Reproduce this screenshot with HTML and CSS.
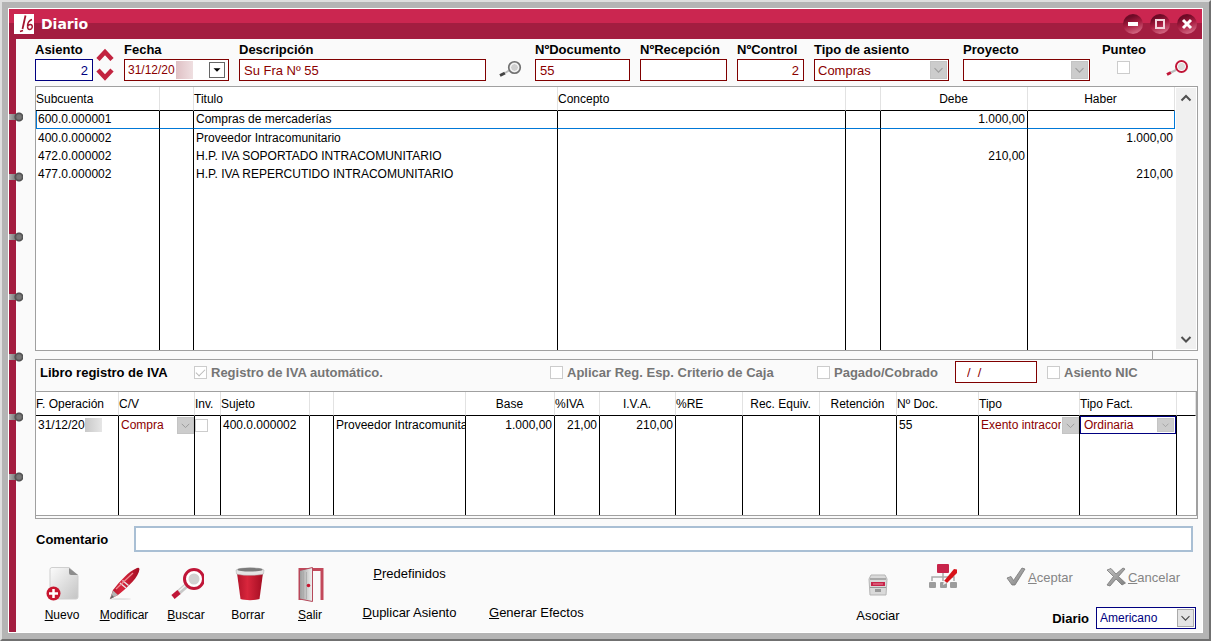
FILE: index.html
```html
<!doctype html>
<html lang="es">
<head>
    <meta charset="utf-8">
    <meta name="viewport" content="width=device-width, initial-scale=1.0">
    <title>Diario</title>
    <link rel="stylesheet" href="styles.css">
</head>
<body>
    <svg class="defs" aria-hidden="true">
        <defs>
            <linearGradient id="paper" x1="0" y1="0" x2="1" y2="1">
                <stop offset="0" stop-color="#fbfbfb"/>
                <stop offset="1" stop-color="#c4c4c4"/>
            </linearGradient>
            <linearGradient id="red" x1="0" y1="0" x2="1" y2="0">
                <stop offset="0" stop-color="#b3142a"/>
                <stop offset=".4" stop-color="#d8263c"/>
                <stop offset="1" stop-color="#a30d22"/>
            </linearGradient>
            <linearGradient id="grey" x1="0" y1="0" x2="1" y2="1">
                <stop offset="0" stop-color="#c4c4c4"/>
                <stop offset="1" stop-color="#7d7d7d"/>
            </linearGradient>
            <linearGradient id="door" x1="0" y1="0" x2="1" y2="0">
                <stop offset="0" stop-color="#9a9a9a"/>
                <stop offset="1" stop-color="#f2f2f2"/>
            </linearGradient>
            <symbol id="chevron" viewBox="0 0 17 18">
                <path d="M4 7l4.500 4.500L13 7" fill="none" stroke="currentColor" stroke-width="1.200"/>
            </symbol>
        </defs>
    </svg>

    <div class="frame">
        <div class="window">
            <header class="titlebar">
                <svg class="logo" viewBox="0 0 20 20">
                    <rect width="20" height="20" fill="#fff"/>
                    <path d="M11.500 1.500L8.500 15" stroke="#a3152f" stroke-width="1.800" fill="none"/>
                    <path d="M6 17.500l3-1" stroke="#a3152f" stroke-width="1.500"/>
                    <path d="M18 5.500c-3 1-4.500 4-4.500 7 0 2 1 3 2.200 3s2.600-1.200 2.600-2.800-.8-2.200-2-2.200-2.400 1-2.800 2.400" stroke="#a3152f" stroke-width="1.400" fill="none"/>
                </svg>
                <h1 class="title">Diario</h1>
                <button class="winbtn" aria-label="Minimizar"><svg viewBox="0 0 20 20"><path d="M5 10h10" stroke="#fff" stroke-width="4"/></svg></button>
                <button class="winbtn" aria-label="Maximizar"><svg viewBox="0 0 20 20"><rect x="6" y="6" width="8" height="8" fill="none" stroke="#f3d6dd" stroke-width="2"/></svg></button>
                <button class="winbtn" aria-label="Cerrar"><svg viewBox="0 0 20 20"><path d="M6 6l8 8M14 6l-8 8" stroke="#fff" stroke-width="3"/></svg></button>
            </header>

            <div class="body">
                <div class="spine">
                    <i class="ring"></i><i class="ring"></i><i class="ring"></i><i class="ring"></i><i class="ring"></i><i class="ring"></i><i class="ring"></i>
                </div>

                <main class="content">
                    <form class="entry">
                        <div class="asiento">
                            <div class="field">
                                <label for="asiento">Asiento</label>
                                <input class="box navy num" id="asiento" value="2">
                            </div>
                            <div class="spin">
                                <button type="button" aria-label="Siguiente"><svg viewBox="0 0 18 13"><path d="M2 11.500l7-7.500 7 7.500" fill="none" stroke="#c22440" stroke-width="4.500"/></svg></button>
                                <button type="button" aria-label="Anterior"><svg viewBox="0 0 18 13"><path d="M2 2l7 7.500L16 2" fill="none" stroke="#c22440" stroke-width="4.500"/></svg></button>
                            </div>
                        </div>
                        <div class="field">
                            <label for="fecha">Fecha</label>
                            <div class="box date">
                                <input id="fecha" value="31/12/20">
                                <span class="smudge pink"></span>
                                <button type="button" class="drop" aria-label="Abrir calendario"><svg viewBox="0 0 16 16"><path d="M4 6h8l-4 4z"/></svg></button>
                            </div>
                        </div>
                        <div class="field">
                            <label for="desc">Descripción</label>
                            <input class="box" id="desc" value="Su Fra Nº 55">
                        </div>
                        <button type="button" class="lens" aria-label="Buscar descripción">
                            <svg viewBox="0 0 24 18"><path d="M1 15.500l5-2.500" stroke="#444" stroke-width="3"/><path d="M6 13l4-2.500" stroke="#bbb" stroke-width="2"/><circle cx="15.500" cy="7.500" r="5.800" fill="#ddd" stroke="#707070" stroke-width="1.600"/><circle cx="15.500" cy="7.500" r="4" fill="#cfcfcf" stroke="#fff"/></svg>
                        </button>
                        <div class="field">
                            <label for="doc">NºDocumento</label>
                            <input class="box" id="doc" value="55">
                        </div>
                        <div class="field">
                            <label for="rec">NºRecepción</label>
                            <input class="box" id="rec">
                        </div>
                        <div class="field">
                            <label for="control">NºControl</label>
                            <input class="box num" id="control" value="2">
                        </div>
                        <div class="field tipo">
                            <label for="tipo">Tipo de asiento</label>
                            <div class="box combo off">
                                <select id="tipo"><option>Compras</option></select>
                                <svg class="arrow"><use href="#chevron"/></svg>
                            </div>
                        </div>
                        <div class="field">
                            <label for="proyecto">Proyecto</label>
                            <div class="box combo off">
                                <select id="proyecto"><option></option></select>
                                <svg class="arrow"><use href="#chevron"/></svg>
                            </div>
                        </div>
                        <div class="field punteo">
                            <label for="punteo">Punteo</label>
                            <input type="checkbox" id="punteo">
                        </div>
                        <button type="button" class="lens" aria-label="Buscar asiento">
                            <svg viewBox="0 0 24 18"><path d="M2 14.500l4-2" stroke="#c01638" stroke-width="3"/><path d="M6 12.500l5-2.500" stroke="#bbb" stroke-width="2"/><circle cx="16.500" cy="6.500" r="5.500" fill="#fff" stroke="#c01638" stroke-width="2"/><circle cx="16.500" cy="6.500" r="3.500" fill="#dcdcdc"/></svg>
                        </button>
                    </form>

                    <section class="ledger">
                        <table class="grid accounts">
                            <thead>
                                <tr><th>Subcuenta</th><th></th><th>Titulo</th><th>Concepto</th><th></th><th class="mid">Debe</th><th class="mid">Haber</th></tr>
                            </thead>
                            <tbody>
                                <tr class="selected"><td>600.0.000001</td><td></td><td>Compras de mercaderías</td><td></td><td></td><td class="num">1.000,00</td><td></td></tr>
                                <tr><td>400.0.000002</td><td></td><td>Proveedor Intracomunitario</td><td></td><td></td><td></td><td class="num">1.000,00</td></tr>
                                <tr><td>472.0.000002</td><td></td><td>H.P. IVA SOPORTADO INTRACOMUNITARIO</td><td></td><td></td><td class="num">210,00</td><td></td></tr>
                                <tr><td>477.0.000002</td><td></td><td>H.P. IVA REPERCUTIDO INTRACOMUNITARIO</td><td></td><td></td><td></td><td class="num">210,00</td></tr>
                                <tr class="fill"><td></td><td></td><td></td><td></td><td></td><td></td><td></td></tr>
                            </tbody>
                        </table>
                        <div class="scroll">
                            <button aria-label="Subir"><svg viewBox="0 0 20 20"><path d="M5.500 12.500L10 8l4.500 4.500" fill="none" stroke="#505050" stroke-width="2"/></svg></button>
                            <button aria-label="Bajar"><svg viewBox="0 0 20 20"><path d="M5.500 8l4.500 4.500L14.500 8" fill="none" stroke="#505050" stroke-width="2"/></svg></button>
                        </div>
                    </section>
                    <div class="tab"></div>

                    <section class="vat">
                        <div class="vatbar">
                            <h2>Libro registro de IVA</h2>
                            <label class="check"><input type="checkbox" checked>Registro de IVA automático.</label>
                            <label class="check"><input type="checkbox">Aplicar Reg. Esp. Criterio de Caja</label>
                            <label class="check"><input type="checkbox">Pagado/Cobrado</label>
                            <input class="box paid" aria-label="Fecha de pago" value="/  /">
                            <label class="check"><input type="checkbox">Asiento NIC</label>
                        </div>
                        <div class="vatgrid">
                            <table class="grid lines">
                                <thead>
                                    <tr><th>F. Operación</th><th>C/V</th><th>Inv.</th><th>Sujeto</th><th></th><th></th><th class="mid">Base</th><th>%IVA</th><th class="mid">I.V.A.</th><th>%RE</th><th class="mid">Rec. Equiv.</th><th class="mid">Retención</th><th>Nº Doc.</th><th>Tipo</th><th>Tipo Fact.</th><th></th></tr>
                                </thead>
                                <tbody>
                                    <tr>
                                        <td>31/12/20<span class="smudge"></span></td>
                                        <td class="ctl"><div class="combo cell off"><select aria-label="C/V"><option>Compra</option></select><svg class="arrow"><use href="#chevron"/></svg></div></td>
                                        <td class="ctl"><input type="checkbox" aria-label="Inv."></td>
                                        <td>400.0.000002</td>
                                        <td></td>
                                        <td>Proveedor Intracomunitario</td>
                                        <td class="num">1.000,00</td>
                                        <td class="num">21,00</td>
                                        <td class="num">210,00</td>
                                        <td></td>
                                        <td></td>
                                        <td></td>
                                        <td>55</td>
                                        <td class="ctl"><div class="combo cell off"><select aria-label="Tipo"><option>Exento intracomunitario</option></select><svg class="arrow"><use href="#chevron"/></svg></div></td>
                                        <td class="ctl"><div class="combo cell off active"><select aria-label="Tipo Fact."><option>Ordinaria</option></select><svg class="arrow"><use href="#chevron"/></svg></div></td>
                                        <td></td>
                                    </tr>
                                    <tr class="fill"><td></td><td></td><td></td><td></td><td></td><td></td><td></td><td></td><td></td><td></td><td></td><td></td><td></td><td></td><td></td><td></td></tr>
                                </tbody>
                            </table>
                        </div>
                    </section>

                    <div class="comment">
                        <label for="comentario">Comentario</label>
                        <input id="comentario">
                    </div>

                    <footer class="actions">
                        <div class="tools">
                            <button class="tool">
                                <svg viewBox="0 0 36 36"><path d="M8 .5h17l9 8V30q0 2-2 2H8q-2 0-2-2V2.500q0-2 2-2z" fill="url(#paper)" stroke="#cfcfcf"/><path d="M25 1v5q0 2 2 2h7z" fill="#8d8d8d"/><circle cx="9.500" cy="26.500" r="7" fill="#c8152f"/><path d="M9.500 22v9M5 26.500h9" stroke="#fff" stroke-width="2.500"/></svg>
                                <span><u>N</u>uevo</span>
                            </button>
                            <button class="tool">
                                <svg viewBox="0 0 36 36"><ellipse cx="14" cy="32" rx="11" ry="1" fill="#e4e4e4"/><path d="M4 32l3-9C14 14 22 5 31 1q2-1 2.500 1C33 10 22 20 12 28z" fill="url(#red)"/><path d="M4 32l3-8.500 5 4.500z" fill="#b4b4b4"/><path d="M4 32l2-4 2 2z" fill="#666"/><path d="M14 16l6 5M16.500 13.500l6 5" stroke="#e6e6e6" stroke-width="1.400"/><path d="M10 22L27 6" stroke="#ee8a92" stroke-width="1.200"/></svg>
                                <span><u>M</u>odificar</span>
                            </button>
                            <button class="tool">
                                <svg viewBox="0 0 36 36"><path d="M10.500 25.500l8-7" stroke="#c9c9c9" stroke-width="5"/><path d="M11 24l7-6" stroke="#f2f2f2" stroke-width="1.500"/><path d="M5 30l6-5" stroke="#c01638" stroke-width="5"/><circle cx="26" cy="12" r="9.500" fill="#fff" stroke="#c01638" stroke-width="3"/><circle cx="26" cy="12" r="5.500" fill="#d2d2d2"/></svg>
                                <span><u>B</u>uscar</span>
                            </button>
                            <button class="tool">
                                <svg viewBox="0 0 36 36"><path d="M7 6h26l-3.500 26c-4 1.500-15 1.500-19 0z" fill="url(#red)"/><path d="M6 3c4-3 24-3 28 0l-.5 4c-5 1.800-22 1.800-27 0z" fill="#e4e4e4" stroke="#aaa" stroke-width=".5"/><ellipse cx="20" cy="2.700" rx="12.500" ry="1.900" fill="#7b7b7b"/></svg>
                                <span>Borrar</span>
                            </button>
                            <button class="tool">
                                <svg viewBox="0 0 36 36"><path d="M8 33V2.500h22V33" fill="none" stroke="#c2485a" stroke-width="3"/><path d="M7.500 3.500L20.500.5v34L7.500 32z" fill="url(#door)" stroke="#b5485a"/><path d="M11.500 4.500v27M14.500 5v27" stroke="#aaa" stroke-width=".8"/><circle cx="16.500" cy="18.500" r="1.800" fill="#c8152f"/></svg>
                                <span><u>S</u>alir</span>
                            </button>
                        </div>
                        <div class="links">
                            <button class="plain"><u>P</u>redefinidos</button>
                            <button class="plain second"><u>D</u>uplicar Asiento</button>
                            <button class="plain second"><u>G</u>enerar Efectos</button>
                        </div>
                        <button class="tool asociar">
                            <svg viewBox="0 0 22 24"><path d="M4 2h14l2 4-1 16H3L2 6z" fill="#dadada" stroke="#b5b5b5"/><path d="M3 6h16" stroke="#999" stroke-width="1.500"/><rect x="4" y="9" width="14" height="4" fill="#c8244a"/><path d="M6 11h10" stroke="#e88a9d"/><path d="M3 14.500h16" stroke="#999"/><rect x="8" y="16" width="6" height="3" fill="#999"/></svg>
                            <span>Asociar</span>
                        </button>
                        <button class="scheme" aria-label="Esquema">
                            <svg viewBox="0 0 30 28"><rect x="9" y="1" width="12" height="9" rx="1" fill="#c8244a"/><path d="M15 10v4M4 18v-4h22v4M15 14v4" fill="none" stroke="#aaa" stroke-width="1.500"/><rect x="1" y="19" width="7" height="6" rx="1" fill="#9c9c9c"/><rect x="12" y="19" width="7" height="6" rx="1" fill="#9c9c9c"/><rect x="22" y="19" width="7" height="6" rx="1" fill="#9c9c9c"/><path d="M16 18L26 6l3 .5V10L19 20z" fill="#d81219"/><path d="M15 22l1-4.500 3 2.500z" fill="#eee"/></svg>
                        </button>
                        <div class="confirm">
                            <div class="pair">
                                <button class="plain muted"><svg viewBox="0 0 20 20"><path d="M1 11l4-1.500 2.500 4L16 1l3 1L9 18H6z" fill="url(#grey)" stroke="#777" stroke-width=".8"/></svg><span><u>A</u>ceptar</span></button>
                                <button class="plain muted"><svg viewBox="0 0 20 20"><path d="M1 3l4-1.500 5 5.500 7-6 2 1-6.500 7.500L19.500 16l-3.500 2-6-6-6 7-3-1 6.500-8.500z" fill="url(#grey)" stroke="#777" stroke-width=".8"/></svg><span><u>C</u>ancelar</span></button>
                            </div>
                            <div class="pick">
                                <label for="diario">Diario</label>
                                <div class="box combo navy">
                                    <select id="diario"><option>Americano</option></select>
                                    <svg class="arrow"><use href="#chevron"/></svg>
                                </div>
                            </div>
                        </div>
                    </footer>
                </main>
            </div>
        </div>
    </div>
</body>
</html>
```
FILE: styles.css
```css
* {
    box-sizing: border-box;
}
html, body {
    margin: 0;
    padding: 0;
}
body, input, select, button {
    font-family: "Liberation Sans", Arial, sans-serif;
    font-size: 12px;
    color: #000;
}
button {
    border: none;
    background: none;
    padding: 0;
}
input, select {
    border: none;
    background: none;
    padding: 0;
    min-width: 0;
    outline: none;
    border-radius: 0;
}
svg {
    display: block;
}
.defs {
    position: absolute;
    width: 0;
    height: 0;
}

/* window frame */
.frame {
    min-height: 100vh;
    display: flex;
    background: #b4b4b4;
    border: 2px solid;
    border-color: #dedede #707070 #707070 #dedede;
    padding: 6px;
}
.window {
    flex: 1;
    min-width: 0;
    display: flex;
    flex-direction: column;
    border: 1px solid #fff;
    background: #fafafa;
}
.titlebar {
    display: flex;
    align-items: center;
    height: 30px;
    padding: 0 5px;
    gap: 7px;
    background: linear-gradient(#cb2650 0 14px, #a31d40 14px);
}
.logo {
    width: 20px;
    height: 20px;
}
.title {
    flex: 1;
    margin: 0;
    font: bold 14px "DejaVu Sans", Verdana, sans-serif;
    color: #fff;
}
.winbtn {
    width: 20px;
    height: 20px;
    border-radius: 50%;
    background: linear-gradient(160deg, #6d0a26 20%, #a81c40 50%, #e07d96);
}
.winbtn svg {
    width: 20px;
    height: 20px;
}
.body {
    flex: 1;
    display: flex;
}
.spine {
    width: 7px;
    padding-top: 73px;
    display: flex;
    flex-direction: column;
    gap: 50px;
    background: #a31d40;
}
.ring {
    width: 14px;
    height: 10px;
    background: radial-gradient(circle at 10px 5px, #777 0 2px, #4c4c4c 4px, transparent 5px), linear-gradient(90deg, #b0b0b0, #666) 0 2px / 9px 6px no-repeat;
}
.content {
    flex: 1;
    min-width: 0;
    padding: 1px 4px 0 19px;
}

/* entry header */
.entry {
    display: grid;
    grid-template-columns: 79px 105px 1fr 29px 95px 87px 67px 139px 127px 46px 42px;
    column-gap: 10px;
    margin-bottom: 5px;
}
.field {
    display: flex;
    flex-direction: column;
    min-width: 0;
}
label, h2 {
    font-size: 13px;
    font-weight: bold;
    white-space: nowrap;
}
.field label {
    line-height: 19px;
}
.asiento {
    display: flex;
    gap: 3px;
}
.asiento .field {
    width: 59px;
}
.box {
    height: 22px;
    border: 1px solid #800000;
    background: #fff;
    color: #8b0000;
    padding: 0 4px;
}
.box, .box select {
    font-size: 13px;
}
.box input, .box select, .cell select {
    color: inherit;
}
.navy {
    border-color: #000080;
    color: #000080;
}
.num {
    text-align: right;
}
.spin {
    display: flex;
    flex-direction: column;
    justify-content: end;
    gap: 7px;
}
.spin svg {
    width: 18px;
    height: 13px;
}
.date {
    display: flex;
    align-items: center;
    padding: 0 3px;
}
.date input {
    width: 48px;
}
.smudge {
    display: inline-block;
    width: 17px;
    height: 14px;
    vertical-align: middle;
    background: linear-gradient(90deg, #c8c8c8, #e6e6e6);
}
.smudge.pink {
    height: 18px;
    background: linear-gradient(90deg, #dfc0c4, #efdfe1);
}
.drop {
    margin-left: auto;
    border: 1px solid #666;
    background: #fff;
}
.drop svg {
    width: 14px;
    height: 14px;
}
.tipo {
    padding-right: 4px;
}
.lens {
    align-self: end;
    justify-self: center;
    margin-bottom: 3px;
}
.lens svg {
    width: 24px;
    height: 18px;
}
.punteo {
    align-items: end;
}
input[type=checkbox] {
    appearance: none;
    display: block;
    flex: none;
    width: 13px;
    height: 13px;
    margin: 0;
    border: 1px solid #ccc;
    background: #fff;
}
input[type=checkbox]:checked::after {
    content: "";
    display: block;
    width: 8px;
    height: 4px;
    margin: 2px 1px;
    border: solid #bbb;
    border-width: 0 0 1px 1px;
    transform: rotate(-45deg);
}
.punteo input {
    align-self: center;
    margin-top: 2px;
}

/* drop-downs: select and arrow share one cell */
.combo {
    display: grid;
    align-items: center;
    padding: 0 1px;
}
.combo select, .combo .arrow {
    grid-area: 1 / 1;
}
.combo select {
    appearance: none;
    width: 100%;
    padding: 0 18px 0 2px;
}
.arrow {
    justify-self: end;
    width: 17px;
    height: 18px;
    border: 1px solid #aaa;
    background: #e4e4e4;
    color: #444;
    pointer-events: none;
}
.off .arrow {
    border-color: #c4c4c4;
    background: #ccc;
    color: #9c9c9c;
}
.cell {
    height: 18px;
    padding: 0;
    color: #8b0000;
}
.cell .arrow {
    height: 17px;
}
.active {
    border: 1px solid #000080;
    padding: 0 1px;
}
.active .arrow {
    height: 14px;
}

/* grids */
.grid {
    width: 100%;
    table-layout: fixed;
    border-spacing: 0;
    background: #fff;
}
.grid th {
    height: 24px;
    padding: 0 1px 0 0;
    border-right: 1px solid #e2e2e2;
    border-bottom: 1px solid #000;
    font-weight: normal;
    text-align: left;
    white-space: nowrap;
}
.grid th.mid {
    text-align: center;
}
.grid td {
    height: 18px;
    padding: 0 2px;
    border-right: 1px solid #000;
    line-height: 17px;
    white-space: nowrap;
    overflow: hidden;
}
.grid td:last-child {
    border-right: none;
}
.grid td.ctl {
    padding: 0;
}
.ledger {
    display: flex;
    border: 1px solid #a0a0a0;
    background: #fff;
}
.accounts .fill td {
    height: 167px;
}
.accounts .selected td {
    border-bottom: 1px solid #0078d7;
}
.accounts .selected td:first-child {
    border-left: 1px solid #0078d7;
    padding-left: 1px;
}
.accounts .selected td:last-child {
    border-right: 1px solid #0078d7;
}
.accounts th:nth-child(1) { width: 124px; }
.accounts th:nth-child(2) { width: 34px; }
.accounts th:nth-child(3) { width: 364px; }
.accounts th:nth-child(5) { width: 35px; }
.accounts th:nth-child(6), .accounts th:nth-child(7) { width: 147px; }
.scroll {
    display: flex;
    flex-direction: column;
    justify-content: space-between;
    margin: 1px;
    background: #f0f0f0;
}
.scroll svg {
    width: 20px;
    height: 20px;
}
.tab {
    height: 8px;
    margin-right: 45px;
    border-right: 1px solid #a0a0a0;
}
.vat {
    border: 1px solid #a0a0a0;
    padding-bottom: 2px;
}
.vatbar {
    display: grid;
    grid-template-columns: 154px 356fr 267fr 138px 92px 150px;
    align-items: center;
    height: 31px;
    padding: 0 0 7px 4px;
}
.vatbar h2 {
    margin: 0;
}
.check {
    display: flex;
    align-items: center;
    gap: 4px;
    color: #757575;
}
.paid {
    width: 82px;
    padding: 0 11px;
    white-space: pre;
}
.vatgrid {
    border: 1px solid #a0a0a0;
    border-left: none;
}
.lines .fill td {
    height: 81px;
}
.lines th:nth-child(1) { width: 83px; }
.lines th:nth-child(2), .lines th:nth-child(9) { width: 76px; }
.lines th:nth-child(3) { width: 26px; }
.lines th:nth-child(4), .lines th:nth-child(7) { width: 89px; }
.lines th:nth-child(5) { width: 24px; }
.lines th:nth-child(8) { width: 45px; }
.lines th:nth-child(10) { width: 67px; }
.lines th:nth-child(11), .lines th:nth-child(12) { width: 77px; }
.lines th:nth-child(13) { width: 82px; }
.lines th:nth-child(14) { width: 101px; }
.lines th:nth-child(15) { width: 97px; }
.lines th:nth-child(16) { width: 19px; }

.comment {
    display: flex;
    align-items: center;
    margin-top: 7px;
    padding: 0 5px 0 1px;
}
.comment label {
    width: 98px;
}
.comment input {
    flex: 1;
    height: 26px;
    padding: 0 4px;
    border: 2px solid #a9bfd4;
    background: #fff;
}

/* bottom actions */
.actions {
    display: flex;
    height: 80px;
    padding: 0 2px 3px 0;
}
.tools {
    display: flex;
    gap: 8px;
    margin-right: 25px;
}
.tool {
    display: flex;
    flex-direction: column;
    align-items: center;
    justify-content: end;
    width: 54px;
    gap: 5px;
    padding-bottom: 7px;
}
.tool svg {
    width: 36px;
    height: 36px;
}
.links {
    display: grid;
    grid-template-columns: 95px 93px;
    column-gap: 32px;
    align-content: start;
    row-gap: 24px;
    padding-top: 14px;
}
.plain, .asociar {
    font-size: 13px;
    white-space: nowrap;
}
.links .second {
    grid-row: 2;
}
.asociar {
    margin-left: auto;
    gap: 11px;
    padding-bottom: 6px;
}
.asociar svg {
    width: 22px;
    height: 24px;
}
.scheme {
    align-self: start;
    margin: 11px 48px 0 23px;
}
.scheme svg {
    width: 30px;
    height: 28px;
}
.confirm {
    display: flex;
    flex-direction: column;
    justify-content: space-between;
    width: 190px;
    padding-top: 15px;
}
.pair {
    display: flex;
    justify-content: space-between;
    padding-right: 16px;
}
.muted {
    display: flex;
    align-items: center;
    gap: 2px;
    color: #858585;
}
.muted svg {
    width: 20px;
    height: 20px;
}
.pick {
    display: flex;
    align-items: center;
    justify-content: end;
    gap: 7px;
}
.pick .combo {
    width: 100px;
}
.pick select {
    font-size: 12px;
}
```
